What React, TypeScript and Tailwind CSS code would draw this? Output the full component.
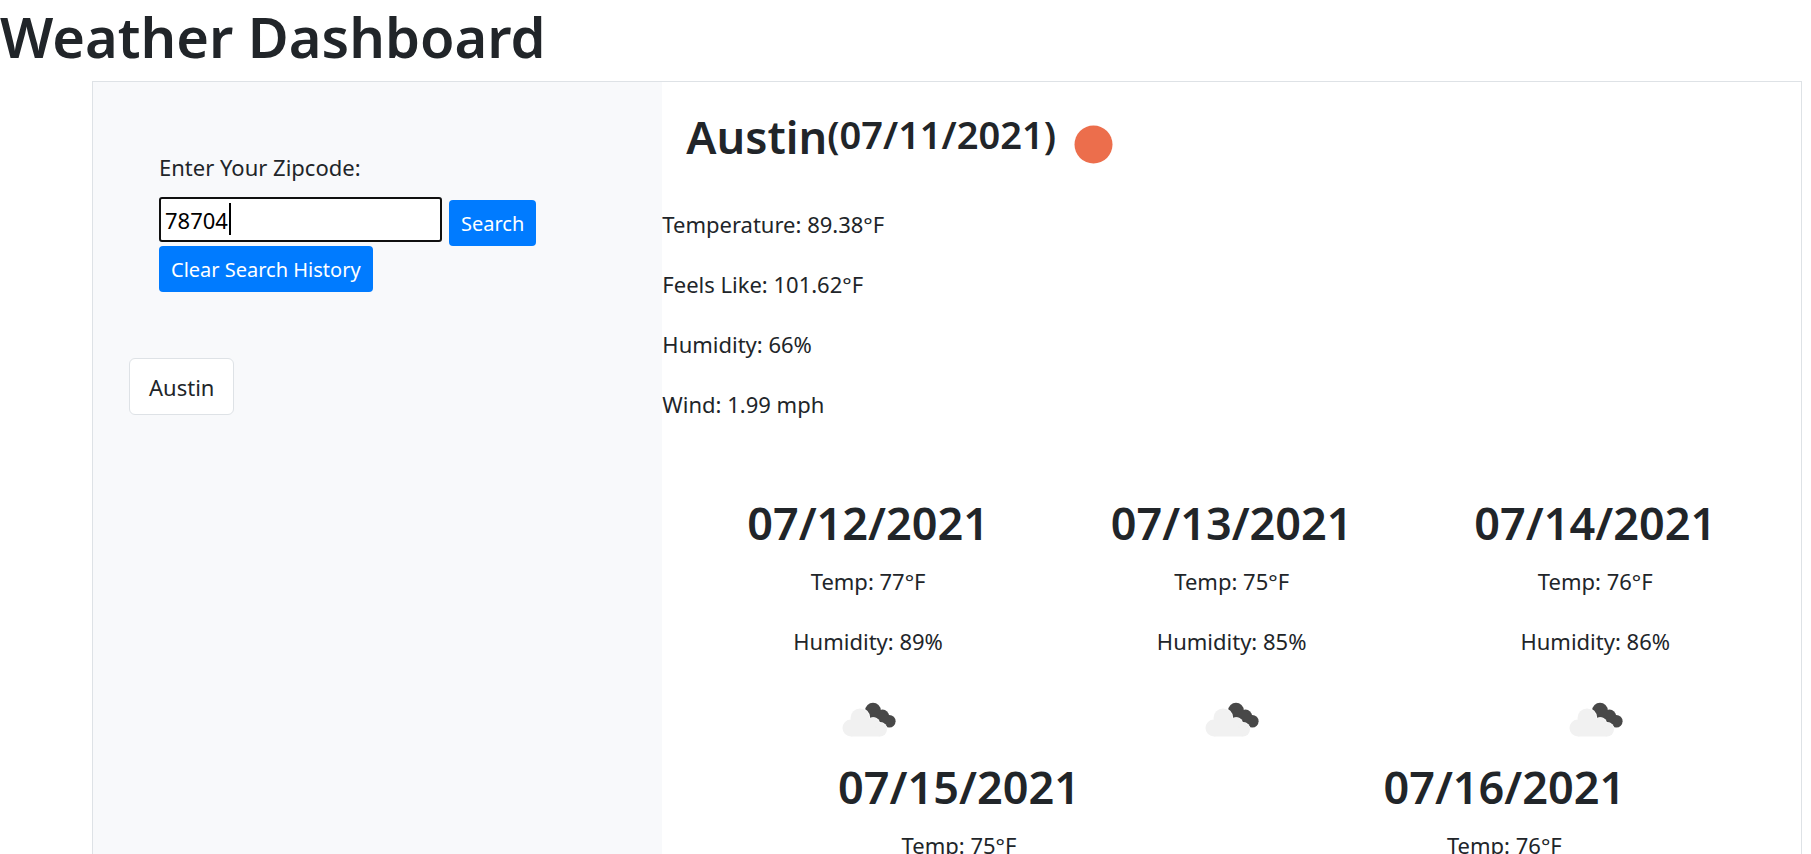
import { useState } from "react";

type Forecast = { date: string; temp: number; humidity?: number };

const firstDays: Forecast[] = [
  { date: "07/12/2021", temp: 77, humidity: 89 },
  { date: "07/13/2021", temp: 75, humidity: 85 },
  { date: "07/14/2021", temp: 76, humidity: 86 },
];

const lastDays: Forecast[] = [
  { date: "07/15/2021", temp: 75 },
  { date: "07/16/2021", temp: 76 },
];

const conditions = [
  "Temperature: 89.38°F",
  "Feels Like: 101.62°F",
  "Humidity: 66%",
  "Wind: 1.99 mph",
];

function BrokenClouds() {
  return (
    <svg viewBox="0 0 75 75" className="h-[75px] w-[75px]" role="img" aria-label="Broken clouds">
      <g fill="#484848">
        <circle cx="42" cy="27.500" r="7.800" />
        <circle cx="51.500" cy="33" r="6.500" />
        <circle cx="58.300" cy="38.300" r="6.300" />
        <path d="M35 27 L41 40 L50 41 L56 44 L62 36 L48 26Z" />
      </g>
      <g fill="#fff">
        <circle cx="29" cy="35" r="10.300" />
        <circle cx="42.500" cy="41" r="6.800" />
        <circle cx="49" cy="46.500" r="7.600" />
      </g>
      <g fill="#f1f1f1">
        <circle cx="20" cy="45" r="8.500" />
        <circle cx="29" cy="35" r="9.500" />
        <circle cx="42" cy="40.500" r="6.200" />
        <circle cx="49" cy="46.500" r="7" />
        <path d="M20 53.500 L20 40 L29 33 L43 40 L49 53.500Z" />
      </g>
    </svg>
  );
}

function DayCard({ date, temp, humidity }: Forecast) {
  return (
    <article className="flex flex-1 flex-col items-center">
      <h2 className="mb-[11px] text-[45px] leading-[58px] font-semibold">{date}</h2>
      <p className="mb-6">Temp: {temp}°F</p>
      {humidity !== undefined && (
        <>
          <p className="mb-6">Humidity: {humidity}%</p>
          <BrokenClouds />
        </>
      )}
    </article>
  );
}

export default function App() {
  const [zip, setZip] = useState("78704");
  return (
    <div className="flex h-screen flex-col overflow-hidden bg-white font-['Noto_Sans',sans-serif] text-[22px] leading-9 text-[#212529]">
      <h1 className="mb-[9px] text-[56px] leading-[72px] font-semibold">Weather Dashboard</h1>
      <div className="mr-[9px] ml-[92px] flex min-h-0 flex-1 border-x border-t border-[#dee2e6]">
        <aside className="w-1/3 shrink-0 bg-[#f8f9fb]">
          <form className="px-[66px] pt-[67px]" onSubmit={(e) => e.preventDefault()}>
            <label htmlFor="zip" className="mb-3 block">
              Enter Your Zipcode:
            </label>
            <div className="flex items-start">
              <div className="relative mr-[7px]">
                <input
                  id="zip"
                  type="text"
                  value={zip}
                  onChange={(e) => setZip(e.target.value)}
                  className="h-[45px] w-[283px] rounded-[3px] border-2 border-[#101010] bg-white px-1 text-black outline-none"
                />
                <span className="absolute top-[6px] left-[70px] h-8 w-[2px] bg-black" />
              </div>
              <button className="mt-[3px] h-[46px] rounded-[4px] bg-[#007bff] px-3 pt-0.5 text-[20px] text-white">
                Search
              </button>
            </div>
            <button
              type="button"
              className="block h-[46px] rounded-[4px] bg-[#007bff] px-3 pt-0.5 text-[20px] text-white"
            >
              Clear Search History
            </button>
          </form>
          <button className="mt-[66px] ml-9 h-[57px] rounded-md border border-[#dee2e6] bg-white px-[19px]">
            Austin
          </button>
        </aside>
        <main className="min-w-0 flex-1">
          <header className="mb-8 flex h-[92px] items-start pt-[26px] pl-6">
            <h2 className="text-[45px] leading-[58px] font-semibold">Austin</h2>
            <h3 className="text-[38px] leading-[52px] font-semibold">(07/11/2021)</h3>
            <svg viewBox="0 0 75 75" className="h-[75px] w-[75px]" role="img" aria-label="Clear sky">
              <circle cx="37.500" cy="36.500" r="19" fill="#ec6e4c" />
            </svg>
          </header>
          {conditions.map((line) => (
            <p key={line} className="mb-6">
              {line}
            </p>
          ))}
          <section className="mt-[72px] px-6">
            <div className="flex">
              {firstDays.map((day) => (
                <DayCard key={day.date} {...day} />
              ))}
            </div>
            <div className="flex">
              {lastDays.map((day) => (
                <DayCard key={day.date} {...day} />
              ))}
            </div>
          </section>
        </main>
      </div>
    </div>
  );
}
